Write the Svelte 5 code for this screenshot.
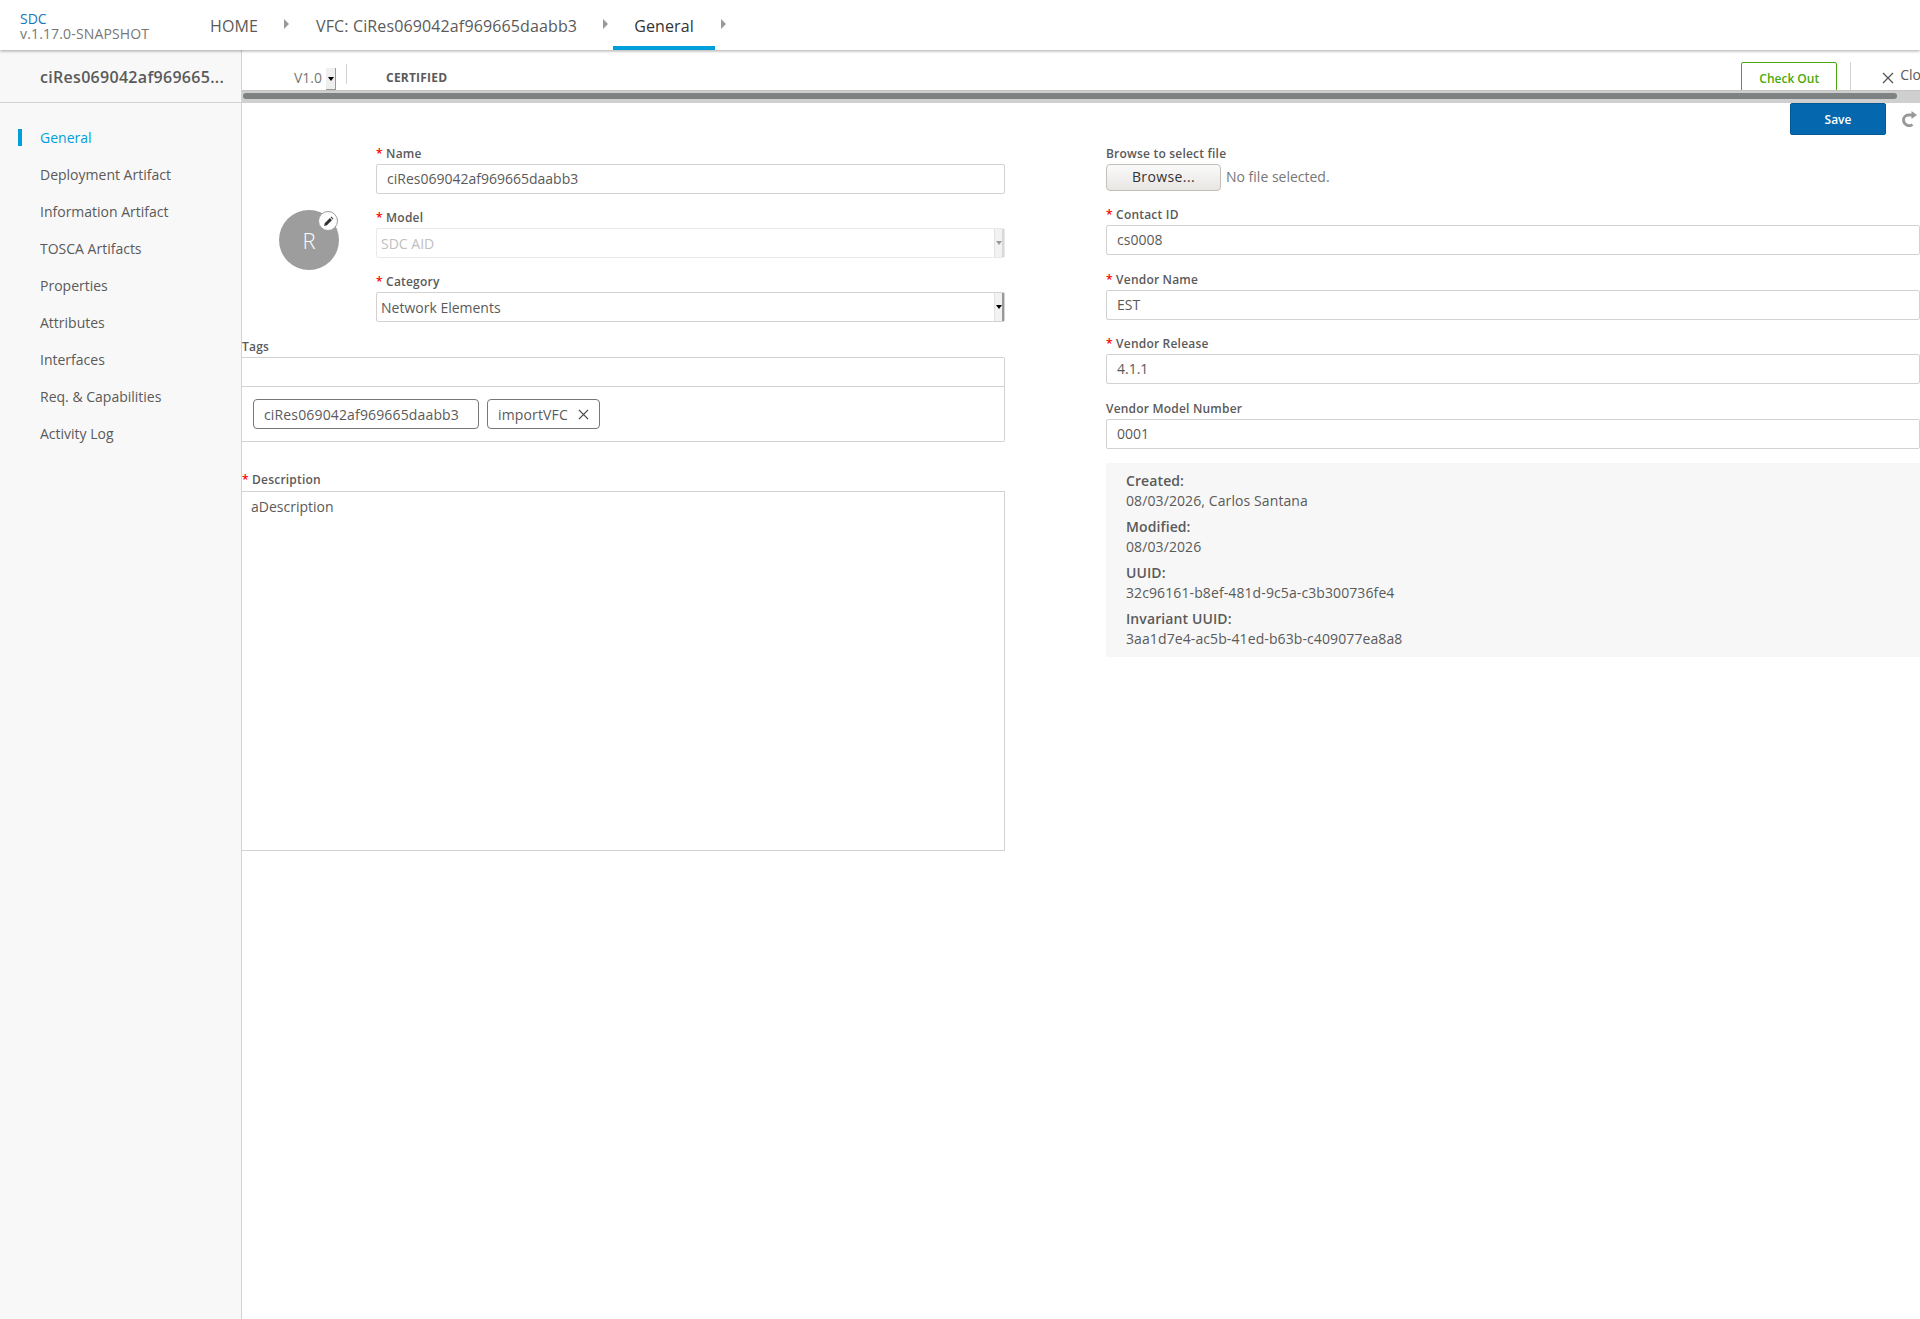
<script lang="ts">
	const nav = [
		'General',
		'Deployment Artifact',
		'Information Artifact',
		'TOSCA Artifacts',
		'Properties',
		'Attributes',
		'Interfaces',
		'Req. & Capabilities',
		'Activity Log'
	];
	const vendor = [
		{ label: 'Contact ID', value: 'cs0008', required: true },
		{ label: 'Vendor Name', value: 'EST', required: true },
		{ label: 'Vendor Release', value: '4.1.1', required: true },
		{ label: 'Vendor Model Number', value: '0001', required: false }
	];
	const info = [
		{ label: 'Created:', value: '08/03/2026, Carlos Santana' },
		{ label: 'Modified:', value: '08/03/2026' },
		{ label: 'UUID:', value: '32c96161-b8ef-481d-9c5a-c3b300736fe4' },
		{ label: 'Invariant UUID:', value: '3aa1d7e4-ac5b-41ed-b63b-c409077ea8a8' }
	];
</script>

<div class="page">
	<header class="topbar">
		<div class="brand">
			<div class="brand-name">SDC</div>
			<div class="brand-version">v.1.17.0-SNAPSHOT</div>
		</div>
		<nav class="crumbs">
			<span class="crumb home">HOME</span>
			<span class="caret"></span>
			<span class="crumb vfc">VFC: CiRes069042af969665daabb3</span>
			<span class="caret"></span>
			<span class="crumb active">General</span>
			<span class="caret"></span>
		</nav>
	</header>

	<div class="body">
		<aside class="sidebar">
			<div class="side-title">ciRes069042af969665...</div>
			<ul class="side-nav">
				{#each nav as item, i}
					<li class:selected={i === 0}>{item}</li>
				{/each}
			</ul>
		</aside>

		<main class="main">
			<div class="toolbar">
				<span class="version">V1.0</span>
				<span class="mini-select"><i></i></span>
				<span class="tool-sep"></span>
				<span class="status">CERTIFIED</span>
				<button class="checkout">Check Out</button>
				<span class="tool-sep close-sep"></span>
				<svg class="close-x" viewBox="0 0 12 12" width="12" height="12">
					<path d="M1 1l10 10M11 1L1 11" stroke="#555" stroke-width="1.3" fill="none" />
				</svg>
				<span class="close-label">Close</span>
			</div>
			<div class="hscroll"><div class="hthumb"></div></div>

			<div class="actions">
				<button class="save">Save</button>
				<svg class="redo" viewBox="0 0 16 16" width="16" height="16">
					<path d="M11.5 13.5A5.6 5.6 0 0 1 2.5 9a5 5 0 0 1 5-5h3.5" stroke="#999" stroke-width="2.8" fill="none" />
					<path d="M10.5 0l5.5 4-5.5 4z" fill="#999" />
				</svg>
			</div>

			<div class="form">
				<section class="left">
					<div class="top-fields">
						<div class="icon-col">
							<div class="avatar">
								R
								<span class="edit">
									<svg viewBox="0 0 12 12" width="11" height="11">
										<path d="M1.2 10.8l.7-3 5.6-5.6 2.3 2.3-5.6 5.6zM8.3 1.4l.8-.8 2.3 2.3-.8.8z" fill="#333" />
									</svg>
								</span>
							</div>
						</div>
						<div class="fields">
							<div class="field">
								<span class="label"><b class="req">*</b> Name</span>
								<div class="input">ciRes069042af969665daabb3</div>
							</div>
							<div class="field">
								<span class="label"><b class="req">*</b> Model</span>
								<div class="select disabled">SDC AID<span class="spin"><i></i></span></div>
							</div>
							<div class="field">
								<span class="label"><b class="req">*</b> Category</span>
								<div class="select">Network Elements<span class="spin"><i></i></span></div>
							</div>
						</div>
					</div>

					<div class="tags-field">
						<span class="label">Tags</span>
						<div class="tags-box">
							<div class="tags-input"></div>
							<div class="tags-list">
								<span class="tag first">ciRes069042af969665daabb3</span>
								<span class="tag">
									importVFC
									<svg viewBox="0 0 12 12" width="11" height="11">
										<path d="M1 1l10 10M11 1L1 11" stroke="#444" stroke-width="1.4" fill="none" />
									</svg>
								</span>
							</div>
						</div>
					</div>

					<div class="desc-field">
						<span class="label desc-label"><b class="req">*</b> Description</span>
						<div class="textarea">aDescription</div>
					</div>
				</section>

				<section class="right">
					<div class="field file-field">
						<span class="label">Browse to select file</span>
						<div class="file-row">
							<button class="browse">Browse...</button>
							<span class="no-file">No file selected.</span>
						</div>
					</div>
					{#each vendor as f}
						<div class="field vendor">
							<span class="label">
								{#if f.required}<b class="req">*</b>&nbsp;{/if}{f.label}
							</span>
							<div class="input">{f.value}</div>
						</div>
					{/each}
					<div class="info">
						{#each info as row}
							<div class="info-row">
								<div class="info-label">{row.label}</div>
								<div class="info-value">{row.value}</div>
							</div>
						{/each}
					</div>
				</section>
			</div>
		</main>
	</div>
</div>

<style>
	:global(body) {
		margin: 0;
		background: #fff;
		font-family: 'Open Sans', 'Noto Sans', sans-serif;
		color: #5a5a5a;
	}

	:global(*) {
		box-sizing: border-box;
	}

	.page {
		width: 1920px;
		height: 1319px;
		display: flex;
		flex-direction: column;
		overflow: hidden;
	}

	/* top bar */
	.topbar {
		height: 50px;
		flex: none;
		display: flex;
		background: #fff;
		box-shadow: 0 1px 3px rgba(0, 0, 0, 0.35);
		position: relative;
		z-index: 2;
	}

	.brand {
		width: 210px;
		padding: 11px 0 0 20px;
		font-size: 14px;
		line-height: 15px;
	}

	.brand-name {
		color: #1b75bc;
	}

	.brand-version {
		color: #777;
		letter-spacing: 0.15px;
	}

	.crumbs {
		display: flex;
		font-size: 16px;
		letter-spacing: 0.13px;
		color: #5a5a5a;
	}

	.crumb {
		height: 50px;
		line-height: 52px;
		white-space: nowrap;
	}

	.caret {
		width: 0;
		height: 0;
		margin: 19px 0 0 26px;
		border-left: 5px solid #999;
		border-top: 5px solid transparent;
		border-bottom: 5px solid transparent;
	}

	.vfc {
		margin-left: 27px;
	}

	.active {
		margin-left: 5px;
		padding: 0 21px;
		color: #333;
		border-bottom: 4px solid #009fdb;
	}

	.active + .caret {
		margin-left: 6px;
	}

	/* sidebar */
	.body {
		flex: 1;
		display: flex;
		min-height: 0;
	}

	.sidebar {
		width: 242px;
		flex: none;
		background: #f8f8f8;
		border-right: 1px solid #d2d2d2;
	}

	.side-title {
		height: 53px;
		padding: 15px 0 0 40px;
		border-bottom: 1px solid #d2d2d2;
		font-size: 16px;
		font-weight: 600;
		letter-spacing: 0.3px;
		line-height: 24px;
		color: #5a5a5a;
		white-space: nowrap;
	}

	.side-nav {
		list-style: none;
		margin: 0;
		padding: 25px 0 0 40px;
		font-size: 14px;
	}

	.side-nav li {
		height: 37px;
		line-height: 20px;
		position: relative;
		color: #5a5a5a;
	}

	.side-nav li.selected {
		color: #009fdb;
	}

	.side-nav li.selected::before {
		content: '';
		position: absolute;
		left: -22px;
		top: 1px;
		width: 4px;
		height: 17px;
		background: #009fdb;
	}

	/* main */
	.main {
		flex: 1;
		min-width: 0;
		overflow: hidden;
	}

	.toolbar {
		height: 40px;
		display: flex;
		align-items: flex-start;
		white-space: nowrap;
		overflow: hidden;
	}

	.toolbar > * {
		flex: none;
	}

	.version {
		margin: 18px 0 0 52px;
		font-size: 14px;
		line-height: 20px;
		color: #777;
	}

	.mini-select {
		width: 10px;
		height: 22px;
		margin: 18px 0 0 4px;
		background: #efefef;
		border-right: 1px solid #999;
		border-bottom: 1px solid #999;
		display: flex;
		align-items: center;
		justify-content: center;
	}

	.mini-select i,
	.spin i {
		width: 0;
		height: 0;
		border-left: 3px solid transparent;
		border-right: 3px solid transparent;
		border-top: 4px solid #000;
	}

	.tool-sep {
		width: 1px;
		height: 20px;
		margin: 14px 0 0 10px;
		background: #d2d2d2;
	}

	.status {
		margin: 19px 0 0 39px;
		font-size: 12px;
		line-height: 18px;
		font-weight: 700;
		letter-spacing: 0.2px;
		color: #5a5a5a;
	}

	.checkout {
		margin: 12px 0 0 1294px;
		width: 96px;
		height: 32px;
		background: #fff;
		border: 1px solid #4ca90c;
		border-radius: 2px;
		color: #4ca90c;
		font: 600 12px 'Open Sans', sans-serif;
		padding: 0;
	}

	.close-sep {
		height: 30px;
		margin: 12px 0 0 13px;
	}

	.close-x {
		margin: 22px 0 0 31px;
	}

	.close-label {
		margin: 15px 0 0 6px;
		font-size: 14px;
		line-height: 20px;
		color: #5a5a5a;
	}

	.hscroll {
		height: 13px;
		background: #cfcfcf;
		padding: 2px 0 0 1px;
		border-top: 1px solid #c4c2be;
	}

	.hthumb {
		width: 1654px;
		height: 6px;
		border-radius: 3px;
		background: #7e8283;
	}

	.actions {
		height: 44px;
		display: flex;
		align-items: flex-start;
		justify-content: flex-end;
		padding: 0 3px 0 0;
	}

	.save {
		width: 96px;
		height: 32px;
		background: #0568ae;
		border: 1px solid #045a97;
		border-radius: 2px;
		color: #fff;
		font: 600 12px 'Open Sans', sans-serif;
	}

	.redo {
		margin: 8px 0 0 15px;
	}

	.form {
		display: flex;
		gap: 101px;
	}

	.left {
		width: 763px;
		flex: none;
	}

	.right {
		flex: 1;
		min-width: 0;
	}

	.top-fields {
		display: flex;
	}

	.icon-col {
		width: 134px;
		flex: none;
		display: flex;
		padding: 63px 0 0 37px;
	}

	.avatar {
		width: 60px;
		height: 60px;
		border-radius: 50%;
		background: #9d9d9d;
		color: #fff;
		font-size: 22px;
		font-weight: 300;
		line-height: 60px;
		text-align: center;
		position: relative;
	}

	.edit {
		position: absolute;
		right: 1px;
		top: 1px;
		width: 20px;
		height: 20px;
		border-radius: 50%;
		background: #fff;
		border: 1px solid #9d9d9d;
		display: flex;
		align-items: center;
		justify-content: center;
	}

	.fields {
		flex: 1;
	}

	.field {
		margin-bottom: 17px;
	}

	.label {
		display: block;
		height: 17px;
		font-size: 12px;
		line-height: 13px;
		font-weight: 600;
		letter-spacing: 0.2px;
		color: #5a5a5a;
		white-space: nowrap;
	}

	.req {
		color: #f00;
		font-weight: 600;
	}

	.input,
	.select {
		height: 30px;
		border: 1px solid #d2d2d2;
		border-radius: 2px;
		font-size: 14px;
		line-height: 28px;
		padding-left: 10px;
		color: #5a5a5a;
		background: #fff;
		position: relative;
	}

	.select {
		padding-left: 4px;
		line-height: 30px;
	}

	.select.disabled {
		color: #c0c0c0;
		border-color: #eaeaea;
	}

	.spin {
		position: absolute;
		right: 0;
		top: 0;
		bottom: 0;
		width: 10px;
		background: #f2f2f2;
		border-left: 1px solid #e2e2e2;
		border-right: 2px solid #999;
		display: flex;
		align-items: center;
		justify-content: center;
	}

	.disabled .spin {
		border-right-color: #d8d8d8;
	}

	.disabled .spin i {
		border-top-color: #999;
	}

	.tags-field {
		margin-top: 1px;
	}

	.tags-box {
		border: 1px solid #d2d2d2;
		border-left: 0;
		height: 85px;
		border-radius: 0 2px 2px 0;
	}

	.tags-input {
		height: 29px;
		border-bottom: 1px solid #d2d2d2;
	}

	.tags-list {
		display: flex;
		gap: 8px;
		padding: 12px 0 0 11px;
	}

	.tag {
		height: 30px;
		display: flex;
		align-items: center;
		border: 1px solid #777;
		border-radius: 4px;
		font-size: 14px;
		letter-spacing: 0.15px;
		padding: 0 10px;
		color: #5a5a5a;
		white-space: nowrap;
	}

	.tag.first {
		width: 226px;
	}

	.tag svg {
		margin-left: 10px;
	}

	.desc-field {
		margin-top: 30px;
	}

	.desc-label {
		height: 19px;
		line-height: 15px;
	}

	.textarea {
		height: 360px;
		border: 1px solid #d2d2d2;
		border-left: 0;
		font-size: 14px;
		line-height: 20px;
		padding: 5px 0 0 9px;
		color: #5a5a5a;
	}

	.file-field {
		margin-bottom: 17px;
	}

	.file-row {
		display: flex;
		align-items: center;
		height: 27px;
		font-size: 14px;
		color: #777;
	}

	.browse {
		width: 115px;
		height: 27px;
		margin-right: 5px;
		padding: 0 0 2px;
		background: linear-gradient(#fafafa, #e8e6e3);
		border: 1px solid #c4bfb8;
		border-radius: 4px;
		color: #333;
		font: 14px 'Open Sans', sans-serif;
		letter-spacing: 0.4px;
	}

	.no-file {
		margin-top: -2px;
	}

	.vendor {
		margin-bottom: 17.5px;
	}

	.info {
		margin-top: -3px;
		background: #f7f7f7;
		height: 194px;
		padding: 8px 20px 0;
		letter-spacing: 0.1px;
	}

	.info-row {
		margin-bottom: 6px;
	}

	.info-label {
		font-size: 14px;
		line-height: 20px;
		font-weight: 600;
		color: #5a5a5a;
	}

	.info-value {
		font-size: 14px;
		line-height: 20px;
		font-weight: 400;
		color: #5a5a5a;
	}
</style>
